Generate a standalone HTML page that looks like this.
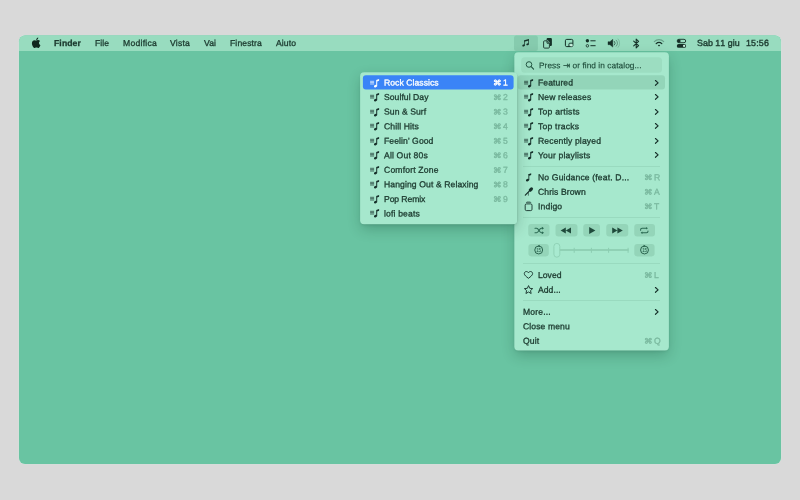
<!DOCTYPE html>
<html lang="it"><head><meta charset="utf-8"><title>Menu bar</title>
<style>
html,body{margin:0;padding:0;}
body{width:800px;height:500px;background:#d9d9d9;position:relative;overflow:hidden;font-family:"Liberation Sans","DejaVu Sans",sans-serif;color:#1c3a2f;}
.desk{position:absolute;left:19px;top:35px;width:762px;height:429px;background:#69c4a2;border-radius:6px;overflow:hidden;}
.bar{position:absolute;left:0;top:0;width:762px;height:16.5px;background:#98dcbf;}
.t{position:absolute;white-space:nowrap;font-size:8.6px;line-height:12px;height:12px;-webkit-text-stroke:0.3px currentColor;}
.wrap{position:absolute;left:0;top:0;width:800px;height:500px;will-change:transform;}
.b{font-weight:bold;}
.k{font-family:"DejaVu Sans",sans-serif;font-size:8.6px;margin-top:-0.4px;margin-left:-1.2px;-webkit-text-stroke:0.4px currentColor;}
.menu{position:absolute;background:#a6e8cd;border-radius:4px;box-shadow:0 5px 14px rgba(0,40,25,.24),0 1px 3px rgba(0,40,25,.13),0 0 0 .5px rgba(0,60,40,.10);}
.ic{position:absolute;overflow:visible;}
.sep{position:absolute;height:1px;background:#99dabf;}
.btn{position:absolute;background:#94d5b9;border-radius:3px;}
.sc{color:#7ab99f;}
.hl{position:absolute;border-radius:3px;}
</style></head><body><div class="wrap">
<svg class="ic" style="left:0;top:0" width="800" height="500" viewBox="0 0 800 500"><rect x="18.6" y="35" width="762.8" height="429.3" rx="6.4" fill="#cfe6dd"/><rect x="19" y="35.4" width="762" height="428.5" rx="6" fill="#69c4a2"/><path d="M19 51.1 V41.4 A6 6 0 0 1 25 35.4 H775 A6 6 0 0 1 781 41.4 V51.1 Z" fill="#98dcbf"/></svg>

<span class="t b" style="letter-spacing:0.122px;left:54px;top:37px;transform:matrix(1,0.0005,0,1,0,0.05);">Finder</span>
<span class="t " style="letter-spacing:0.035px;left:95px;top:37px;transform:matrix(1,0.0005,0,1,0,0.05);">File</span>
<span class="t " style="letter-spacing:0.250px;left:123px;top:37px;transform:matrix(1,0.0005,0,1,0,0.05);">Modifica</span>
<span class="t " style="letter-spacing:0.209px;left:170px;top:37px;transform:matrix(1,0.0005,0,1,0,0.05);">Vista</span>
<span class="t " style="letter-spacing:0.068px;left:204px;top:37px;transform:matrix(1,0.0005,0,1,0,0.05);">Vai</span>
<span class="t " style="letter-spacing:0.119px;left:230px;top:37px;transform:matrix(1,0.0005,0,1,0,0.05);">Finestra</span>
<span class="t " style="letter-spacing:0.081px;left:276px;top:37px;transform:matrix(1,0.0005,0,1,0,0.05);">Aiuto</span>
<span class="t " style="letter-spacing:0.015px;left:697.3px;top:37px;transform:matrix(1,0.0005,0,1,0,0.05);font-size:8.9px;font-kerning:none;-webkit-text-stroke-width:0.38px;">Sab 11 giu</span>
<span class="t " style="letter-spacing:0.176px;left:745.8px;top:37px;transform:matrix(1,0.0005,0,1,0,0.05);font-size:8.9px;font-kerning:none;-webkit-text-stroke-width:0.38px;">15:56</span>
<svg class="ic" style="left:31px;top:36.8px" width="10.3" height="12.1" viewBox="0 0 170 200"><path fill="#12271f" d="M150.4 68.2c-1 .8-18.500 10.600-18.500 32.600 0 25.400 22.300 34.400 23 34.600-.1.600-3.500 12.400-11.800 24.400-7.300 10.600-15 21.100-26.700 21.100s-14.700-6.800-28.200-6.800c-13.200 0-17.800 7-28.500 7s-18.200-9.800-26.700-21.800C23 145.200 15 123.400 15 102.700c0-33.200 21.600-50.800 42.800-50.800 11.300 0 20.700 7.400 27.800 7.400 6.700 0 17.300-7.900 30.100-7.900 4.900 0 22.400.4 34.700 16.800zM110.500 37.200c5.300-6.300 9.100-15.100 9.100-23.900 0-1.200-.1-2.400-.3-3.400-8.700.3-19 5.800-25.200 13-4.900 5.600-9.500 14.300-9.500 23.200 0 1.300.2 2.700.3 3.100.5.100 1.400.2 2.300.2 7.800 0 17.600-5.200 23.300-12.200z"/></svg>
<svg class="ic" style="left:513px;top:34px" width="26" height="19" viewBox="513 34 26 19"><rect x="514" y="35.5" width="23.90" height="15.60" rx="2.5" fill="#86cbae"/></svg>
<svg class="ic" style="left:500px;top:33px" width="200" height="20" viewBox="500 33 200 20">
<!-- music -->
<g fill="#163128" stroke="none">
<path d="M524.2 40.3 L528.9 38.9 V40.4 L524.2 41.8 Z"/>
<rect x="524.2" y="40.6" width="0.7" height="5"/>
<rect x="528.2" y="39.4" width="0.7" height="5"/>
<ellipse cx="523.6" cy="45.5" rx="1.3" ry="0.95" transform="rotate(-20 523.6 45.5)"/>
<ellipse cx="527.6" cy="44.3" rx="1.3" ry="0.95" transform="rotate(-20 527.6 44.3)"/>
</g>
<!-- clipboard stack -->
<path d="M546.6 40.3 V39.2 Q546.6 38.1 547.7 38.1 H550.8 Q551.9 38.1 551.9 39.2 V45 Q551.9 46.1 550.8 46.1 H549.9 V42.5 L547.8 40.3 Z" fill="#163128"/>
<path d="M544.6 40.8 H547.2 L549.4 43 V47.1 Q549.4 48.1 548.4 48.1 H544.6 Q543.6 48.1 543.6 47.1 V41.8 Q543.6 40.8 544.6 40.8 Z M547 40.9 V43.2 H549.3" fill="none" stroke="#163128" stroke-width="0.9" stroke-linejoin="round"/>
<!-- pip -->
<rect x="565.4" y="39.4" width="7.5" height="7.2" rx="1.3" fill="none" stroke="#163128" stroke-width="1"/>
<path d="M568.9 46.6 V44.2 Q568.9 43.2 569.9 43.2 H572.9" fill="none" stroke="#163128" stroke-width="0.9"/>
<rect x="570.2" y="44.3" width="2.3" height="1.9" fill="#d2f3e4"/>
<!-- list -->
<circle cx="587.4" cy="40.8" r="1.7" fill="#163128"/>
<circle cx="587.4" cy="45.8" r="1.25" fill="none" stroke="#163128" stroke-width="0.85"/>
<path d="M590.8 40.8 H595.2 M590.8 45.7 H595.2" stroke="#163128" stroke-width="1" stroke-linecap="round" fill="none"/>
<!-- speaker -->
<path d="M608 41.7 H609.9 L612.8 39.3 V47.1 L609.9 44.7 H608 Z" fill="#163128" stroke="#163128" stroke-width="0.4" stroke-linejoin="round"/>
<path d="M614.4 41.4 A2.6 2.6 0 0 1 614.4 45" fill="none" stroke="#163128" stroke-width="0.8" stroke-linecap="round" opacity="0.85"/>
<path d="M616.2 40.2 A4.4 4.4 0 0 1 616.2 46.2" fill="none" stroke="#163128" stroke-width="0.8" stroke-linecap="round" opacity="0.5"/>
<path d="M618.1 39 A6.3 6.3 0 0 1 618.1 47.4" fill="none" stroke="#163128" stroke-width="0.8" stroke-linecap="round" opacity="0.25"/>
<!-- bluetooth -->
<path d="M633.7 41.1 L638.6 45.7 L636.2 47.9 V39.1 L638.6 41.3 L633.7 45.9" fill="none" stroke="#163128" stroke-width="1.05" stroke-linejoin="round" stroke-linecap="round"/>
<!-- wifi -->
<path d="M654.3 41.6 A6.6 6.6 0 0 1 663.7 41.6" fill="none" stroke="#163128" stroke-width="1.1" stroke-linecap="round" opacity="0.35"/>
<path d="M656.2 43.6 A4 4 0 0 1 661.8 43.6" fill="none" stroke="#163128" stroke-width="1.3" stroke-linecap="round"/>
<path d="M657.8 45.3 A1.7 1.7 0 0 1 660.2 45.3 L659 46.6 Z" fill="#163128"/>
<!-- control center -->
<rect x="677.2" y="39.3" width="8.5" height="3.4" rx="1.7" fill="none" stroke="#163128" stroke-width="0.9"/>
<circle cx="678.9" cy="41" r="1.7" fill="#163128"/>
<rect x="676.8" y="44" width="9.3" height="3.8" rx="1.9" fill="#163128"/>
<circle cx="684.1" cy="45.9" r="1.15" fill="#c8f0df"/>
</svg>

<div class="menu" style="left:515px;top:53px;width:153px;height:297px"></div><svg class="ic" style="left:513px;top:51px" width="157" height="301" viewBox="513 51 157 301"><rect x="514.3" y="52.2" width="154.60" height="298.40" rx="4" fill="#a6e8cd"/></svg>
<svg class="ic" style="left:520px;top:56px" width="143" height="18" viewBox="520 56 143 18"><rect x="521.2" y="57.3" width="140.80" height="15.40" rx="3.5" fill="#9cddc1"/></svg>
<svg class="ic" style="left:524px;top:59px" width="12" height="12" viewBox="524 59 12 12"><circle cx="529" cy="64.5" r="2.8" fill="none" stroke="#1d4f3c" stroke-width="0.95"/><path d="M531.2 66.7 L533.6 69.1" stroke="#1d4f3c" stroke-width="1.05" stroke-linecap="round"/></svg>

<span class="t " style="letter-spacing:0.061px;left:539.4px;top:59px;transform:matrix(1,0.0005,0,1,0,0.20);font-size:8.3px;color:#1f4d3b;-webkit-text-stroke-width:0.15px;">Press <span style="font-family:'DejaVu Sans',sans-serif;font-size:8.6px;line-height:8px">⇥</span> or find in catalog...</span>
<svg class="ic" style="left:516px;top:74px" width="150" height="17" viewBox="516 74 150 17"><rect x="517.7" y="75.3" width="147.30" height="14.10" rx="3" fill="#93d5b9"/></svg>
<svg class="ic" style="left:524px;top:77.50px" width="10" height="10" viewBox="0 -5 10 10"><path d="M0.1 -1.7H4.1M0.1 -0.35H4.1M0.1 1H4.1" fill="none" stroke="#16302a" stroke-width="0.75" opacity="0.9"/><path d="M6.2 -3 L9.1 -4 V-2.2 L7.2 -1.5 V3.2 H6.2 Z" fill="#16302a"/><ellipse cx="5.5" cy="3.15" rx="1.6" ry="1.2" transform="rotate(-20 5.5 3.2)" fill="#16302a"/></svg>
<span class="t " style="letter-spacing:0.080px;left:538.2px;top:76px;transform:matrix(1,0.0005,0,1,0,0.50);">Featured</span>
<svg class="ic" style="left:654px;top:78.50px" width="6" height="8" viewBox="0 0 6 8"><path d="M1.45 1.5 L4.1 3.9 L1.45 6.3" fill="none" stroke="#16302a" stroke-width="1.15" stroke-linecap="round" stroke-linejoin="round"/></svg>
<svg class="ic" style="left:524px;top:92.05px" width="10" height="10" viewBox="0 -5 10 10"><path d="M0.1 -1.7H4.1M0.1 -0.35H4.1M0.1 1H4.1" fill="none" stroke="#16302a" stroke-width="0.75" opacity="0.9"/><path d="M6.2 -3 L9.1 -4 V-2.2 L7.2 -1.5 V3.2 H6.2 Z" fill="#16302a"/><ellipse cx="5.5" cy="3.15" rx="1.6" ry="1.2" transform="rotate(-20 5.5 3.2)" fill="#16302a"/></svg>
<span class="t " style="letter-spacing:0.103px;left:538.2px;top:91px;transform:matrix(1,0.0005,0,1,0,0.05);">New releases</span>
<svg class="ic" style="left:654px;top:93.05px" width="6" height="8" viewBox="0 0 6 8"><path d="M1.45 1.5 L4.1 3.9 L1.45 6.3" fill="none" stroke="#16302a" stroke-width="1.15" stroke-linecap="round" stroke-linejoin="round"/></svg>
<svg class="ic" style="left:524px;top:106.60px" width="10" height="10" viewBox="0 -5 10 10"><path d="M0.1 -1.7H4.1M0.1 -0.35H4.1M0.1 1H4.1" fill="none" stroke="#16302a" stroke-width="0.75" opacity="0.9"/><path d="M6.2 -3 L9.1 -4 V-2.2 L7.2 -1.5 V3.2 H6.2 Z" fill="#16302a"/><ellipse cx="5.5" cy="3.15" rx="1.6" ry="1.2" transform="rotate(-20 5.5 3.2)" fill="#16302a"/></svg>
<span class="t " style="letter-spacing:0.239px;left:538.2px;top:105px;transform:matrix(1,0.0005,0,1,0,0.60);">Top artists</span>
<svg class="ic" style="left:654px;top:107.60px" width="6" height="8" viewBox="0 0 6 8"><path d="M1.45 1.5 L4.1 3.9 L1.45 6.3" fill="none" stroke="#16302a" stroke-width="1.15" stroke-linecap="round" stroke-linejoin="round"/></svg>
<svg class="ic" style="left:524px;top:121.15px" width="10" height="10" viewBox="0 -5 10 10"><path d="M0.1 -1.7H4.1M0.1 -0.35H4.1M0.1 1H4.1" fill="none" stroke="#16302a" stroke-width="0.75" opacity="0.9"/><path d="M6.2 -3 L9.1 -4 V-2.2 L7.2 -1.5 V3.2 H6.2 Z" fill="#16302a"/><ellipse cx="5.5" cy="3.15" rx="1.6" ry="1.2" transform="rotate(-20 5.5 3.2)" fill="#16302a"/></svg>
<span class="t " style="letter-spacing:0.213px;left:538.2px;top:120px;transform:matrix(1,0.0005,0,1,0,0.15);">Top tracks</span>
<svg class="ic" style="left:654px;top:122.15px" width="6" height="8" viewBox="0 0 6 8"><path d="M1.45 1.5 L4.1 3.9 L1.45 6.3" fill="none" stroke="#16302a" stroke-width="1.15" stroke-linecap="round" stroke-linejoin="round"/></svg>
<svg class="ic" style="left:524px;top:135.70px" width="10" height="10" viewBox="0 -5 10 10"><path d="M0.1 -1.7H4.1M0.1 -0.35H4.1M0.1 1H4.1" fill="none" stroke="#16302a" stroke-width="0.75" opacity="0.9"/><path d="M6.2 -3 L9.1 -4 V-2.2 L7.2 -1.5 V3.2 H6.2 Z" fill="#16302a"/><ellipse cx="5.5" cy="3.15" rx="1.6" ry="1.2" transform="rotate(-20 5.5 3.2)" fill="#16302a"/></svg>
<span class="t " style="letter-spacing:0.126px;left:538.2px;top:134px;transform:matrix(1,0.0005,0,1,0,0.70);">Recently played</span>
<svg class="ic" style="left:654px;top:136.70px" width="6" height="8" viewBox="0 0 6 8"><path d="M1.45 1.5 L4.1 3.9 L1.45 6.3" fill="none" stroke="#16302a" stroke-width="1.15" stroke-linecap="round" stroke-linejoin="round"/></svg>
<svg class="ic" style="left:524px;top:150.25px" width="10" height="10" viewBox="0 -5 10 10"><path d="M0.1 -1.7H4.1M0.1 -0.35H4.1M0.1 1H4.1" fill="none" stroke="#16302a" stroke-width="0.75" opacity="0.9"/><path d="M6.2 -3 L9.1 -4 V-2.2 L7.2 -1.5 V3.2 H6.2 Z" fill="#16302a"/><ellipse cx="5.5" cy="3.15" rx="1.6" ry="1.2" transform="rotate(-20 5.5 3.2)" fill="#16302a"/></svg>
<span class="t " style="letter-spacing:0.159px;left:538.2px;top:149px;transform:matrix(1,0.0005,0,1,0,0.25);">Your playlists</span>
<svg class="ic" style="left:654px;top:151.25px" width="6" height="8" viewBox="0 0 6 8"><path d="M1.45 1.5 L4.1 3.9 L1.45 6.3" fill="none" stroke="#16302a" stroke-width="1.15" stroke-linecap="round" stroke-linejoin="round"/></svg>
<div class="sep" style="left:523px;top:165.8px;width:136.5px"></div>
<span class="t " style="letter-spacing:0.148px;left:538.2px;top:171px;transform:matrix(1,0.0005,0,1,0,0.20);">No Guidance (feat. D...</span>
<span class="t k sc" style="left:644.8px;top:171px;transform:matrix(1,0.0005,0,0.84,0,0.55);">⌘</span><span class="t sc" style="left:654.0px;top:171px;transform:matrix(1,0.0005,0,1,0,0.20);">R</span>
<span class="t " style="letter-spacing:0.090px;left:538.2px;top:185px;transform:matrix(1,0.0005,0,1,0,0.75);">Chris Brown</span>
<span class="t k sc" style="left:644.8px;top:185px;transform:matrix(1,0.0005,0,0.84,0,1.10);">⌘</span><span class="t sc" style="left:654.0px;top:185px;transform:matrix(1,0.0005,0,1,0,0.75);">A</span>
<span class="t " style="letter-spacing:0.146px;left:538.2px;top:200px;transform:matrix(1,0.0005,0,1,0,0.25);">Indigo</span>
<span class="t k sc" style="left:644.8px;top:200px;transform:matrix(1,0.0005,0,0.84,0,0.60);">⌘</span><span class="t sc" style="left:654.0px;top:200px;transform:matrix(1,0.0005,0,1,0,0.25);">T</span>
<svg class="ic" style="left:522px;top:170px" width="14" height="44" viewBox="522 170 14 44">
<!-- note -->
<g fill="#16302a"><path d="M528.4 174.2 L531.2 173.2 V175 L529.3 175.7 Z"/><rect x="528.4" y="174.2" width="0.9" height="5.9"/><ellipse cx="527.5" cy="180.1" rx="1.65" ry="1.2" transform="rotate(-20 527.4 180.1)"/></g>
<!-- mic -->
<g stroke="#16302a" fill="none" stroke-linecap="round">
<path d="M530.3 190.1 L531.5 188.9" stroke-width="3.1"/>
<path d="M529 191.4 L525.3 195.1" stroke-width="1.25"/>
<path d="M528.4 192.6 V195.3" stroke-width="0.7" opacity="0.85"/>
</g>
<!-- stack -->
<rect x="525.2" y="203.9" width="6.8" height="6.7" rx="1.3" fill="none" stroke="#16302a" stroke-width="0.9"/>
<path d="M526.4 202.5 H530.8" stroke="#16302a" stroke-width="0.8" stroke-linecap="round" opacity="0.75"/>
<path d="M527.2 201.4 H530" stroke="#16302a" stroke-width="0.7" stroke-linecap="round" opacity="0.5"/>
</svg>

<div class="sep" style="left:523px;top:216.6px;width:136.5px"></div>
<svg class="ic" style="left:527px;top:223px" width="24" height="15" viewBox="527 223 24 15"><rect x="528.25" y="224.1" width="21.25" height="12.50" rx="3" fill="#94d5b9"/></svg>
<svg class="ic" style="left:554px;top:223px" width="25" height="15" viewBox="554 223 25 15"><rect x="555.5" y="224.1" width="22.00" height="12.50" rx="3" fill="#94d5b9"/></svg>
<svg class="ic" style="left:582px;top:223px" width="19" height="15" viewBox="582 223 19 15"><rect x="583.25" y="224.1" width="16.75" height="12.50" rx="3" fill="#94d5b9"/></svg>
<svg class="ic" style="left:605px;top:223px" width="25" height="15" viewBox="605 223 25 15"><rect x="606.25" y="224.1" width="22.00" height="12.50" rx="3" fill="#94d5b9"/></svg>
<svg class="ic" style="left:633px;top:223px" width="23" height="15" viewBox="633 223 23 15"><rect x="634.25" y="224.1" width="20.75" height="12.50" rx="3" fill="#94d5b9"/></svg>
<svg class="ic" style="left:527px;top:242px" width="23" height="16" viewBox="527 242 23 16"><rect x="528.4" y="243.9" width="20.40" height="12.50" rx="3" fill="#94d5b9"/></svg>
<svg class="ic" style="left:633px;top:242px" width="23" height="16" viewBox="633 242 23 16"><rect x="634.3" y="243.9" width="20.30" height="12.50" rx="3" fill="#94d5b9"/></svg>
<svg class="ic" style="left:524px;top:220px" width="140" height="40" viewBox="524 220 140 40">
<!-- shuffle -->
<g fill="none" stroke="#2a6a52" stroke-width="1.1" stroke-linecap="round" stroke-linejoin="round">
<path d="M535 228.3 H536.6 C538.6 228.3 539.4 232.7 541.4 232.7 H542.6"/>
<path d="M535 232.7 H536.6 C538.6 232.7 539.4 228.3 541.4 228.3 H542.6"/>
</g>
<path d="M541.9 226.8 L544 228.3 L541.9 229.8 Z M541.9 231.2 L544 232.7 L541.9 234.2 Z" fill="#2a6a52"/>
<!-- rewind -->
<path d="M565.8 227.5 V233.6 L560.6 230.55 Z M571 227.5 V233.6 L565.8 230.55 Z" fill="#1f4a3b"/>
<!-- play -->
<path d="M589.2 227.1 L595.4 230.55 L589.2 234 Z" fill="#1f4a3b"/>
<!-- forward -->
<path d="M612.2 227.5 V233.6 L617.4 230.55 Z M617.4 227.5 V233.6 L622.8 230.55 Z" fill="#1f4a3b"/>
<!-- repeat -->
<g fill="none" stroke="#2a6a52" stroke-width="1.05" stroke-linecap="round" stroke-linejoin="round">
<path d="M640.6 230.2 V229.8 Q640.6 228.3 642.1 228.3 H646.6"/>
<path d="M648 230.9 V231.3 Q648 232.8 646.5 232.8 H642"/>
</g>
<path d="M646.2 227 L647.9 228.3 L646.2 229.6 Z M642.4 231.5 L640.7 232.8 L642.4 234.1 Z" fill="#2a6a52"/>
<!-- slider -->
<rect x="559" y="249" width="69.5" height="2" fill="#90d1b5"/>
<path d="M574.2 247.8 V252.8 M591.4 247.8 V252.8 M608.6 247.8 V252.8 M628.1 247.8 V252.8" stroke="#8ccdb1" stroke-width="1"/>
<rect x="553.9" y="243.4" width="5.9" height="13.8" rx="2.95" fill="#a8ead0" stroke="#8fd0b4" stroke-width="0.9"/>
<!-- skip back 15 -->
<g fill="none" stroke="#1f5944" stroke-width="0.9">
<circle cx="538.7" cy="250" r="3.95"/>
<circle cx="644.5" cy="250" r="3.95"/>
</g>
<path d="M539.6 244.7 L537.7 246 L539.6 247.2 Z M643.6 244.7 L645.5 246 L643.6 247.2 Z" fill="#1f5944"/>
<text x="538.6" y="251.6" font-size="4.5" font-family="Liberation Sans, sans-serif" text-anchor="middle" fill="#1f5944" letter-spacing="-0.25">15</text>
<text x="644.4" y="251.6" font-size="4.5" font-family="Liberation Sans, sans-serif" text-anchor="middle" fill="#1f5944" letter-spacing="-0.25">15</text>
</svg>

<div class="sep" style="left:523px;top:263.4px;width:136.5px"></div>
<span class="t " style="letter-spacing:0.026px;left:538.2px;top:269px;transform:matrix(1,0.0005,0,1,0,0.00);">Loved</span>
<span class="t k sc" style="left:644.8px;top:269px;transform:matrix(1,0.0005,0,0.84,0,0.35);">⌘</span><span class="t sc" style="left:654.0px;top:269px;transform:matrix(1,0.0005,0,1,0,0.00);">L</span>
<span class="t " style="letter-spacing:0.055px;left:538.2px;top:283px;transform:matrix(1,0.0005,0,1,0,0.80);">Add...</span>
<svg class="ic" style="left:654px;top:285.80px" width="6" height="8" viewBox="0 0 6 8"><path d="M1.45 1.5 L4.1 3.9 L1.45 6.3" fill="none" stroke="#16302a" stroke-width="1.15" stroke-linecap="round" stroke-linejoin="round"/></svg>
<svg class="ic" style="left:522px;top:268px" width="14" height="28" viewBox="522 268 14 28">
<path d="M528.45 278.3 C526.3 276.7 524.3 275.2 524.3 273.6 C524.3 272.3 525.3 271.5 526.4 271.5 C527.3 271.5 528.05 272 528.45 272.7 C528.85 272 529.6 271.5 530.5 271.5 C531.6 271.5 532.6 272.3 532.6 273.6 C532.6 275.2 530.6 276.7 528.45 278.3 Z" fill="none" stroke="#16302a" stroke-width="0.92" stroke-linejoin="round"/>
<path d="M528.55 285.6 L529.75 288.3 L532.7 288.6 L530.5 290.6 L531.15 293.5 L528.55 292 L525.95 293.5 L526.6 290.6 L524.4 288.6 L527.35 288.3 Z" fill="none" stroke="#16302a" stroke-width="0.92" stroke-linejoin="round"/>
</svg>

<div class="sep" style="left:523px;top:300px;width:136.5px"></div>
<span class="t " style="letter-spacing:0.143px;left:523.0px;top:305px;transform:matrix(1,0.0005,0,1,0,0.75);">More...</span>
<svg class="ic" style="left:654px;top:307.75px" width="6" height="8" viewBox="0 0 6 8"><path d="M1.45 1.5 L4.1 3.9 L1.45 6.3" fill="none" stroke="#16302a" stroke-width="1.15" stroke-linecap="round" stroke-linejoin="round"/></svg>
<span class="t " style="letter-spacing:0.094px;left:523.2px;top:320px;transform:matrix(1,0.0005,0,1,0,0.25);">Close menu</span>
<span class="t " style="letter-spacing:0.134px;left:523.2px;top:334px;transform:matrix(1,0.0005,0,1,0,0.75);">Quit</span>
<span class="t k sc" style="left:644.8px;top:334px;transform:matrix(1,0.0005,0,0.84,0,1.10);">⌘</span><span class="t sc" style="left:654.0px;top:334px;transform:matrix(1,0.0005,0,1,0,0.75);">Q</span>
<div class="menu" style="left:361px;top:73px;width:156px;height:151px"></div><svg class="ic" style="left:359px;top:71px" width="160" height="155" viewBox="359 71 160 155"><rect x="360.1" y="72.2" width="157.00" height="152.00" rx="4" fill="#a6e8cd"/></svg>
<svg class="ic" style="left:361px;top:74px" width="154" height="17" viewBox="361 74 154 17"><rect x="362.9" y="75.3" width="150.70" height="14.30" rx="3" fill="#3a84f7"/></svg>
<svg class="ic" style="left:369.6px;top:77.50px" width="10" height="10" viewBox="0 -5 10 10"><path d="M0.1 -1.7H4.1M0.1 -0.35H4.1M0.1 1H4.1" fill="none" stroke="#ffffff" stroke-width="0.75" opacity="0.9"/><path d="M6.2 -3 L9.1 -4 V-2.2 L7.2 -1.5 V3.2 H6.2 Z" fill="#ffffff"/><ellipse cx="5.5" cy="3.15" rx="1.6" ry="1.2" transform="rotate(-20 5.5 3.2)" fill="#ffffff"/></svg>
<span class="t " style="letter-spacing:0.052px;left:383.75px;top:76px;transform:matrix(1,0.0005,0,1,0,0.50);color:#fff;">Rock Classics</span>
<span class="t k " style="left:494px;top:76px;transform:matrix(1,0.0005,0,0.84,0,0.85);color:#fff;">⌘</span><span class="t " style="left:503.2px;top:76px;transform:matrix(1,0.0005,0,1,0,0.50);color:#fff;">1</span>
<svg class="ic" style="left:369.6px;top:92.05px" width="10" height="10" viewBox="0 -5 10 10"><path d="M0.1 -1.7H4.1M0.1 -0.35H4.1M0.1 1H4.1" fill="none" stroke="#16302a" stroke-width="0.75" opacity="0.9"/><path d="M6.2 -3 L9.1 -4 V-2.2 L7.2 -1.5 V3.2 H6.2 Z" fill="#16302a"/><ellipse cx="5.5" cy="3.15" rx="1.6" ry="1.2" transform="rotate(-20 5.5 3.2)" fill="#16302a"/></svg>
<span class="t " style="letter-spacing:0.054px;left:383.75px;top:91px;transform:matrix(1,0.0005,0,1,0,0.05);">Soulful Day</span>
<span class="t k sc" style="left:494px;top:91px;transform:matrix(1,0.0005,0,0.84,0,0.40);">⌘</span><span class="t sc" style="left:503.2px;top:91px;transform:matrix(1,0.0005,0,1,0,0.05);">2</span>
<svg class="ic" style="left:369.6px;top:106.60px" width="10" height="10" viewBox="0 -5 10 10"><path d="M0.1 -1.7H4.1M0.1 -0.35H4.1M0.1 1H4.1" fill="none" stroke="#16302a" stroke-width="0.75" opacity="0.9"/><path d="M6.2 -3 L9.1 -4 V-2.2 L7.2 -1.5 V3.2 H6.2 Z" fill="#16302a"/><ellipse cx="5.5" cy="3.15" rx="1.6" ry="1.2" transform="rotate(-20 5.5 3.2)" fill="#16302a"/></svg>
<span class="t " style="letter-spacing:0.069px;left:383.75px;top:105px;transform:matrix(1,0.0005,0,1,0,0.60);">Sun &amp; Surf</span>
<span class="t k sc" style="left:494px;top:105px;transform:matrix(1,0.0005,0,0.84,0,0.95);">⌘</span><span class="t sc" style="left:503.2px;top:105px;transform:matrix(1,0.0005,0,1,0,0.60);">3</span>
<svg class="ic" style="left:369.6px;top:121.15px" width="10" height="10" viewBox="0 -5 10 10"><path d="M0.1 -1.7H4.1M0.1 -0.35H4.1M0.1 1H4.1" fill="none" stroke="#16302a" stroke-width="0.75" opacity="0.9"/><path d="M6.2 -3 L9.1 -4 V-2.2 L7.2 -1.5 V3.2 H6.2 Z" fill="#16302a"/><ellipse cx="5.5" cy="3.15" rx="1.6" ry="1.2" transform="rotate(-20 5.5 3.2)" fill="#16302a"/></svg>
<span class="t " style="letter-spacing:0.094px;left:383.75px;top:120px;transform:matrix(1,0.0005,0,1,0,0.15);">Chill Hits</span>
<span class="t k sc" style="left:494px;top:120px;transform:matrix(1,0.0005,0,0.84,0,0.50);">⌘</span><span class="t sc" style="left:503.2px;top:120px;transform:matrix(1,0.0005,0,1,0,0.15);">4</span>
<svg class="ic" style="left:369.6px;top:135.70px" width="10" height="10" viewBox="0 -5 10 10"><path d="M0.1 -1.7H4.1M0.1 -0.35H4.1M0.1 1H4.1" fill="none" stroke="#16302a" stroke-width="0.75" opacity="0.9"/><path d="M6.2 -3 L9.1 -4 V-2.2 L7.2 -1.5 V3.2 H6.2 Z" fill="#16302a"/><ellipse cx="5.5" cy="3.15" rx="1.6" ry="1.2" transform="rotate(-20 5.5 3.2)" fill="#16302a"/></svg>
<span class="t " style="letter-spacing:0.086px;left:383.75px;top:134px;transform:matrix(1,0.0005,0,1,0,0.70);">Feelin' Good</span>
<span class="t k sc" style="left:494px;top:134px;transform:matrix(1,0.0005,0,0.84,0,1.05);">⌘</span><span class="t sc" style="left:503.2px;top:134px;transform:matrix(1,0.0005,0,1,0,0.70);">5</span>
<svg class="ic" style="left:369.6px;top:150.25px" width="10" height="10" viewBox="0 -5 10 10"><path d="M0.1 -1.7H4.1M0.1 -0.35H4.1M0.1 1H4.1" fill="none" stroke="#16302a" stroke-width="0.75" opacity="0.9"/><path d="M6.2 -3 L9.1 -4 V-2.2 L7.2 -1.5 V3.2 H6.2 Z" fill="#16302a"/><ellipse cx="5.5" cy="3.15" rx="1.6" ry="1.2" transform="rotate(-20 5.5 3.2)" fill="#16302a"/></svg>
<span class="t " style="letter-spacing:0.164px;left:383.75px;top:149px;transform:matrix(1,0.0005,0,1,0,0.25);">All Out 80s</span>
<span class="t k sc" style="left:494px;top:149px;transform:matrix(1,0.0005,0,0.84,0,0.60);">⌘</span><span class="t sc" style="left:503.2px;top:149px;transform:matrix(1,0.0005,0,1,0,0.25);">6</span>
<svg class="ic" style="left:369.6px;top:164.80px" width="10" height="10" viewBox="0 -5 10 10"><path d="M0.1 -1.7H4.1M0.1 -0.35H4.1M0.1 1H4.1" fill="none" stroke="#16302a" stroke-width="0.75" opacity="0.9"/><path d="M6.2 -3 L9.1 -4 V-2.2 L7.2 -1.5 V3.2 H6.2 Z" fill="#16302a"/><ellipse cx="5.5" cy="3.15" rx="1.6" ry="1.2" transform="rotate(-20 5.5 3.2)" fill="#16302a"/></svg>
<span class="t " style="letter-spacing:0.175px;left:383.75px;top:163px;transform:matrix(1,0.0005,0,1,0,0.80);">Comfort Zone</span>
<span class="t k sc" style="left:494px;top:163px;transform:matrix(1,0.0005,0,0.84,0,1.15);">⌘</span><span class="t sc" style="left:503.2px;top:163px;transform:matrix(1,0.0005,0,1,0,0.80);">7</span>
<svg class="ic" style="left:369.6px;top:179.35px" width="10" height="10" viewBox="0 -5 10 10"><path d="M0.1 -1.7H4.1M0.1 -0.35H4.1M0.1 1H4.1" fill="none" stroke="#16302a" stroke-width="0.75" opacity="0.9"/><path d="M6.2 -3 L9.1 -4 V-2.2 L7.2 -1.5 V3.2 H6.2 Z" fill="#16302a"/><ellipse cx="5.5" cy="3.15" rx="1.6" ry="1.2" transform="rotate(-20 5.5 3.2)" fill="#16302a"/></svg>
<span class="t " style="letter-spacing:0.104px;left:383.75px;top:178px;transform:matrix(1,0.0005,0,1,0,0.35);">Hanging Out &amp; Relaxing</span>
<span class="t k sc" style="left:494px;top:178px;transform:matrix(1,0.0005,0,0.84,0,0.70);">⌘</span><span class="t sc" style="left:503.2px;top:178px;transform:matrix(1,0.0005,0,1,0,0.35);">8</span>
<svg class="ic" style="left:369.6px;top:193.90px" width="10" height="10" viewBox="0 -5 10 10"><path d="M0.1 -1.7H4.1M0.1 -0.35H4.1M0.1 1H4.1" fill="none" stroke="#16302a" stroke-width="0.75" opacity="0.9"/><path d="M6.2 -3 L9.1 -4 V-2.2 L7.2 -1.5 V3.2 H6.2 Z" fill="#16302a"/><ellipse cx="5.5" cy="3.15" rx="1.6" ry="1.2" transform="rotate(-20 5.5 3.2)" fill="#16302a"/></svg>
<span class="t " style="letter-spacing:-0.087px;left:383.75px;top:192px;transform:matrix(1,0.0005,0,1,0,0.90);">Pop Remix</span>
<span class="t k sc" style="left:494px;top:192px;transform:matrix(1,0.0005,0,0.84,0,1.25);">⌘</span><span class="t sc" style="left:503.2px;top:192px;transform:matrix(1,0.0005,0,1,0,0.90);">9</span>
<svg class="ic" style="left:369.6px;top:208.45px" width="10" height="10" viewBox="0 -5 10 10"><path d="M0.1 -1.7H4.1M0.1 -0.35H4.1M0.1 1H4.1" fill="none" stroke="#16302a" stroke-width="0.75" opacity="0.9"/><path d="M6.2 -3 L9.1 -4 V-2.2 L7.2 -1.5 V3.2 H6.2 Z" fill="#16302a"/><ellipse cx="5.5" cy="3.15" rx="1.6" ry="1.2" transform="rotate(-20 5.5 3.2)" fill="#16302a"/></svg>
<span class="t " style="letter-spacing:0.159px;left:383.75px;top:207px;transform:matrix(1,0.0005,0,1,0,0.45);">lofi beats</span>
</div></body></html>
